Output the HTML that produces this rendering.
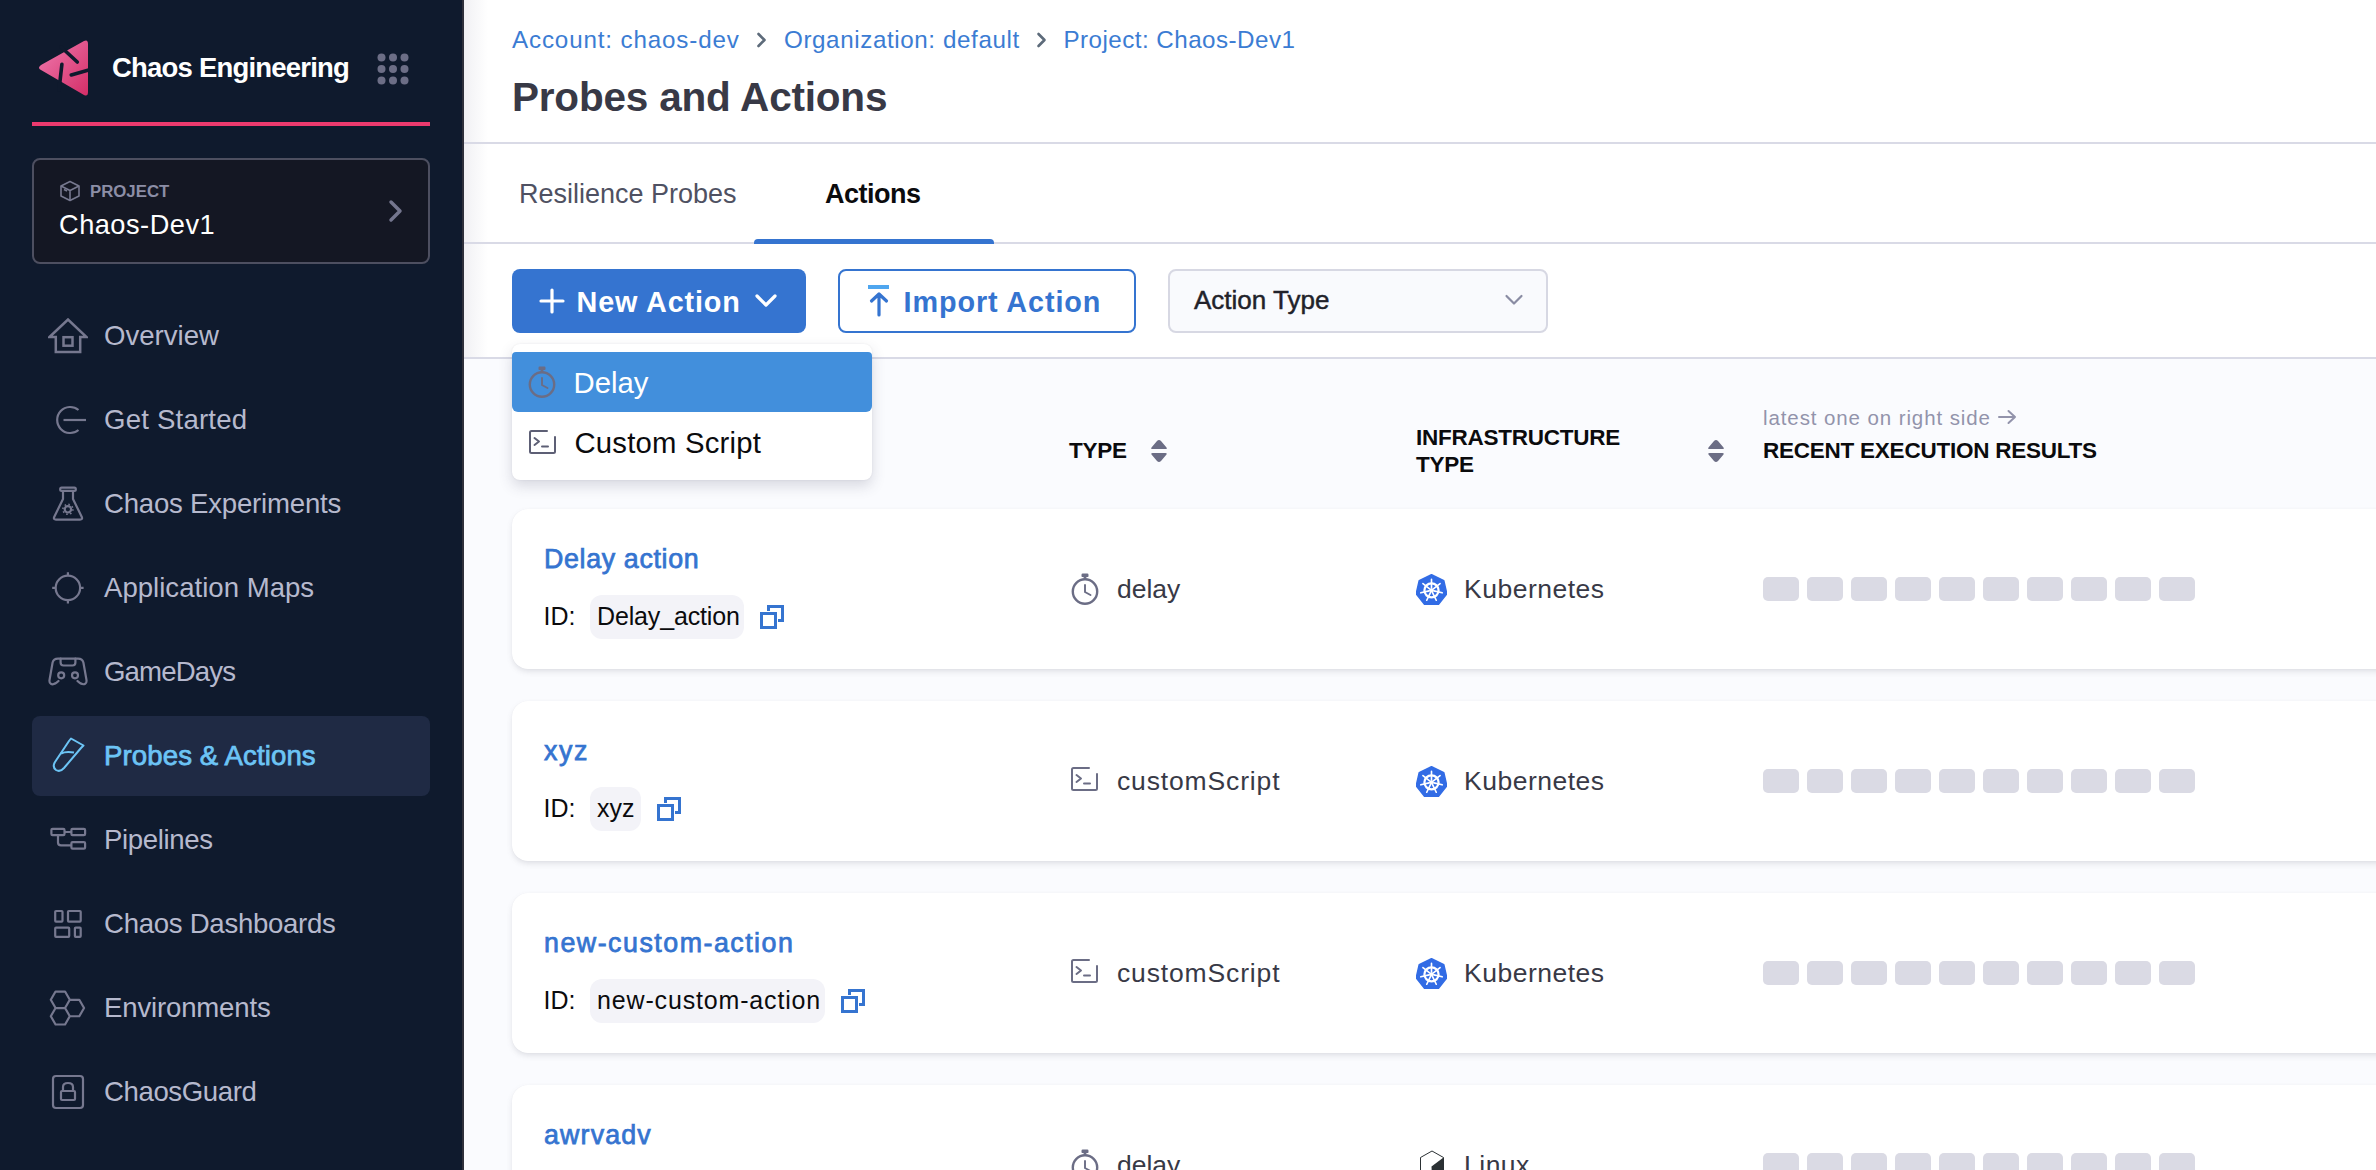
<!DOCTYPE html>
<html><head><meta charset="utf-8">
<style>
*{box-sizing:border-box;margin:0;padding:0}
html,body{width:2376px;height:1170px;overflow:hidden;background:#fff;font-family:"Liberation Sans",sans-serif}
.a{position:absolute;white-space:nowrap}
#side{position:absolute;left:0;top:0;width:462px;height:1170px;background:#0f1a2d}
#sideline{position:absolute;left:462px;top:0;width:2px;height:1170px;background:#2f303b}
#main{position:absolute;left:464px;top:0;width:1912px;height:1170px;background:#fff}
.nav{position:absolute;left:104px;font-size:27.6px;line-height:28px;color:#b6b9cd}
.ico{position:absolute}
.card{left:512px;width:1900px;height:160px;background:#fff;border-radius:16px;box-shadow:0 0 1px rgba(40,41,61,0.06),0 3px 6px -1px rgba(96,97,112,0.2)}
.rname{left:544px;font-size:26.8px;line-height:26.8px;color:#3574d0;-webkit-text-stroke:0.75px #3574d0}
.rid{font-size:25px;line-height:25px;color:#0b0b0d}
.pill{left:590px;height:44px;border-radius:12px;background:#f3f3f8}
.rtxt{font-size:26.5px;line-height:26.5px;color:#383946}
.bar{width:36px;height:24px;border-radius:5px;background:#dadae4}
.bc{font-size:24.2px;line-height:25px;color:#3b7cd3;letter-spacing:0.85px}
.th{font-size:22.5px;line-height:23px;font-weight:bold;color:#0b0b0d;letter-spacing:-0.24px}
</style></head><body>
<div id="side">
  <!-- logo -->
  <svg class="ico" style="left:36px;top:38px" width="54" height="60" viewBox="0 0 54 60">
    <defs><linearGradient id="lg" x1="0" y1="0" x2="1" y2="1"><stop offset="0" stop-color="#f07bb0"/><stop offset="1" stop-color="#d42e67"/></linearGradient></defs>
    <path d="M48 3 Q52 1 52 6 L52 54 Q52 59 48 57 L5 32 Q1 30 5 27 Z" fill="url(#lg)"/>
    <path d="M25 9 L41.3 24" stroke="#0f1a2d" stroke-width="3.6" stroke-linecap="round"/>
    <path d="M25.9 26.2 L23 52" stroke="#0f1a2d" stroke-width="3.6" stroke-linecap="round"/>
    <path d="M35.3 36.9 L56 31" stroke="#0f1a2d" stroke-width="3.6" stroke-linecap="round"/>
  </svg>
  <div class="a" id="t_ce" style="left:112px;top:54px;font-size:27.5px;line-height:28px;font-weight:bold;color:#fff;letter-spacing:-0.8px">Chaos Engineering</div>
  <svg class="ico" style="left:377px;top:53px" width="32" height="32" viewBox="0 0 32 32" fill="#6c6e86">
    <circle cx="4.5" cy="4.5" r="4"/><circle cx="16" cy="4.5" r="4"/><circle cx="27.5" cy="4.5" r="4"/>
    <circle cx="4.5" cy="16" r="4"/><circle cx="16" cy="16" r="4"/><circle cx="27.5" cy="16" r="4"/>
    <circle cx="4.5" cy="27.5" r="4"/><circle cx="16" cy="27.5" r="4"/><circle cx="27.5" cy="27.5" r="4"/>
  </svg>
  <div class="a" style="left:32px;top:122px;width:398px;height:4px;background:#ec3a6e"></div>
  <!-- project box -->
  <div class="a" style="left:32px;top:158px;width:398px;height:106px;border:2px solid #4d4f60;border-radius:8px;background:#141723"></div>
  <svg class="ico" style="left:59px;top:180px" width="22" height="22" viewBox="0 0 22 22" fill="none" stroke="#77798f" stroke-width="1.6" stroke-linejoin="round">
    <path d="M11 1.5 L20 6 L20 16 L11 20.5 L2 16 L2 6 Z"/><path d="M2 6 L11 10.5 L20 6 M11 10.5 L11 20.5"/><path d="M5 9.5 L8 11"/>
  </svg>
  <div class="a" id="t_proj" style="left:90px;top:183px;font-size:16.8px;line-height:17px;font-weight:bold;color:#8c8ea6;letter-spacing:0px">PROJECT</div>
  <div class="a" id="t_dev" style="left:59px;top:211px;font-size:27.2px;line-height:28px;color:#fff;letter-spacing:0.5px">Chaos-Dev1</div>
  <svg class="ico" style="left:386px;top:198px" width="20" height="26" viewBox="0 0 20 26" fill="none" stroke="#74768e" stroke-width="3.5" stroke-linecap="round" stroke-linejoin="round"><path d="M5 4 L14 13 L5 22"/></svg>

  <!-- nav -->
  <svg class="ico" style="left:48px;top:318px" width="40" height="36" viewBox="0 0 40 36" fill="none" stroke="#76788f" stroke-width="2.5">
    <path d="M1.5 19 L20 1.5 L38.5 19 L32.2 19 L32.2 34 L7.8 34 L7.8 19 Z"/><rect x="15.5" y="19.2" width="9" height="8.5"/>
  </svg>
  <div class="a nav" id="t_ov" style="top:322px">Overview</div>
  <svg class="ico" style="left:53px;top:404px" width="36" height="32" viewBox="0 0 36 32" fill="none" stroke="#76788f" stroke-width="2.2">
    <path d="M25.5 6 A13 13 0 1 0 25.5 26"/><path d="M10.5 16 L33 16"/>
  </svg>
  <div class="a nav" style="top:406px;letter-spacing:0.2px">Get Started</div>
  <svg class="ico" style="left:50px;top:484px" width="36" height="40" viewBox="0 0 36 40" fill="none" stroke="#76788f" stroke-width="2.2" stroke-linejoin="round">
    <rect x="10.2" y="3.6" width="15.6" height="3.2" rx="1.4"/><path d="M13 6.8 L13 15 L4.2 33 Q3.2 35.6 6 35.6 L30 35.6 Q32.8 35.6 31.8 33 L23 15 L23 6.8"/><circle cx="17.9" cy="25.3" r="3.2"/><circle cx="17.9" cy="25.3" r="5" stroke-width="1.6" stroke-dasharray="1.6 2.3"/>
  </svg>
  <div class="a nav" style="top:490px;letter-spacing:-0.22px">Chaos Experiments</div>
  <svg class="ico" style="left:50px;top:570px" width="36" height="36" viewBox="0 0 36 36" fill="none" stroke="#76788f" stroke-width="2.2">
    <circle cx="17.9" cy="17.9" r="12.2"/><path d="M17.9 2.2 L17.9 5.7 M17.9 30.1 L17.9 33.6 M2.2 17.9 L5.7 17.9 M30.1 17.9 L33.6 17.9"/>
  </svg>
  <div class="a nav" style="top:574px">Application Maps</div>
  <svg class="ico" style="left:48px;top:654px" width="40" height="34" viewBox="0 0 40 34" fill="none" stroke="#76788f" stroke-width="2.2" stroke-linejoin="round" stroke-linecap="round">
    <path d="M10.5 27 Q6 31.5 2.8 29.8 Q1 28.8 1.6 25.5 L4.6 8.5 Q5.5 4.6 10 4.6 L30 4.6 Q34.5 4.6 35.4 8.5 L38.4 25.5 Q39 28.8 37.2 29.8 Q34 31.5 29.5 27"/><path d="M12.6 4.6 L12.6 8.5 Q12.6 11.5 15.5 11.5 L24.5 11.5 Q27.4 11.5 27.4 8.5 L27.4 4.6"/><circle cx="13.2" cy="21.3" r="3"/><circle cx="27" cy="21.3" r="3"/>
  </svg>
  <div class="a nav" style="top:658px;letter-spacing:-0.85px">GameDays</div>
  <div class="a" style="left:32px;top:716px;width:398px;height:80px;border-radius:8px;background:#1f2a44"></div>
  <svg class="ico" style="left:52px;top:737px" width="34" height="36" viewBox="0 0 34 36" fill="none" stroke="#6cc4f5" stroke-width="2" stroke-linejoin="round">
    <path d="M19 1.5 L31.5 8.5 L29 11 L12 31 Q8 35.5 4 33 Q0 30 3 25 L17 4 Z"/><path d="M9 16.5 Q14 14 22 15.5"/>
  </svg>
  <div class="a nav" id="t_pa" style="top:742px;color:#6cc4f5;-webkit-text-stroke:0.75px #6cc4f5;letter-spacing:0.1px">Probes &amp; Actions</div>
  <svg class="ico" style="left:48px;top:826px" width="40" height="26" viewBox="0 0 40 26" fill="none" stroke="#76788f" stroke-width="2.2">
    <rect x="3.4" y="2.9" width="13.1" height="6.3" rx="1.2"/><rect x="23.4" y="2.9" width="13.7" height="6.3" rx="1.2"/><rect x="23.4" y="16.1" width="13.7" height="6.5" rx="1.2"/><path d="M16.5 6 L23.4 6 M10 9.2 L10 16.5 Q10 19.4 13 19.4 L23.4 19.4"/>
  </svg>
  <div class="a nav" style="top:826px;letter-spacing:-0.38px">Pipelines</div>
  <svg class="ico" style="left:52px;top:908px" width="32" height="32" viewBox="0 0 32 32" fill="none" stroke="#76788f" stroke-width="2.2">
    <rect x="3.2" y="3" width="7.3" height="10.6" rx="0.8"/><rect x="16" y="3" width="12.7" height="10.6" rx="0.8"/><rect x="3.2" y="19.6" width="14" height="9.3" rx="0.8"/><rect x="22.9" y="19.6" width="5.8" height="9.3" rx="0.8"/>
  </svg>
  <div class="a nav" style="top:910px;letter-spacing:-0.29px">Chaos Dashboards</div>
  <svg class="ico" style="left:48px;top:988px" width="40" height="40" viewBox="0 0 40 40" fill="none" stroke="#76788f" stroke-width="2.2" stroke-linejoin="round">
    <path d="M21.80 11.80 L17.05 20.03 L7.55 20.03 L2.80 11.80 L7.55 3.57 L17.05 3.57 Z M21.80 28.25 L17.05 36.48 L7.55 36.48 L2.80 28.25 L7.55 20.03 L17.05 20.03 Z M36.05 20.03 L31.30 28.25 L21.80 28.25 L17.05 20.03 L21.80 11.80 L31.30 11.80 Z"/>
  </svg>
  <div class="a nav" style="top:994px;letter-spacing:-0.18px">Environments</div>
  <svg class="ico" style="left:51px;top:1074px" width="34" height="36" viewBox="0 0 34 36" fill="none" stroke="#76788f" stroke-width="2.2">
    <rect x="2" y="2" width="30" height="32" rx="3"/><rect x="10" y="17" width="14" height="9" rx="1"/><path d="M12 17 L12 13 Q12 9 17 9 Q22 9 22 13 L22 17"/>
  </svg>
  <div class="a nav" style="top:1078px;letter-spacing:-0.4px">ChaosGuard</div>
</div>
<div id="sideline"></div>

<div id="main">
  <div class="a" style="left:0;top:0;width:24px;height:1170px;background:linear-gradient(to right,#f1f1f4,rgba(255,255,255,0))"></div>
</div>
<!-- header -->
<div class="a bc" id="t_bc1" style="left:512px;top:27px">Account: chaos-dev</div>
<svg class="ico" style="left:755px;top:31px" width="14" height="18" viewBox="0 0 14 18" fill="none" stroke="#5d6b7a" stroke-width="2.6" stroke-linecap="round" stroke-linejoin="round"><path d="M3.5 3 L9.5 9 L3.5 15"/></svg>
<div class="a bc" id="t_bc2" style="left:784px;top:27px;letter-spacing:0.6px">Organization: default</div>
<svg class="ico" style="left:1035px;top:31px" width="14" height="18" viewBox="0 0 14 18" fill="none" stroke="#5d6b7a" stroke-width="2.6" stroke-linecap="round" stroke-linejoin="round"><path d="M3.5 3 L9.5 9 L3.5 15"/></svg>
<div class="a bc" id="t_bc3" style="left:1063.5px;top:27px;letter-spacing:0.46px">Project: Chaos-Dev1</div>
<div class="a" id="t_title" style="left:512px;top:76.5px;font-size:40.5px;line-height:41px;font-weight:bold;color:#383946;letter-spacing:-0.2px">Probes and Actions</div>
<div class="a" style="left:464px;top:142px;width:1912px;height:2px;background:#d9dae6"></div>
<!-- tabs -->
<div class="a" id="t_rp" style="left:519px;top:180.5px;font-size:27px;line-height:27px;color:#4f5162">Resilience Probes</div>
<div class="a" id="t_act" style="left:825px;top:180.5px;font-size:27px;line-height:27px;color:#0b0b0d;font-weight:bold;letter-spacing:-0.5px">Actions</div>
<div class="a" style="left:464px;top:242px;width:1912px;height:2px;background:#d9dae6"></div>
<div class="a" style="left:754px;top:239px;width:240px;height:5px;background:#3574d0;border-radius:4px 4px 0 0"></div>
<!-- toolbar -->
<div class="a" style="left:512px;top:269px;width:294px;height:64px;background:#3574d0;border-radius:8px"></div>
<svg class="ico" style="left:539px;top:288px" width="26" height="26" viewBox="0 0 26 26" stroke="#fff" stroke-width="3.2" stroke-linecap="round"><path d="M13 2 L13 24 M2 13 L24 13"/></svg>
<div class="a" id="t_na" style="left:576.5px;top:287.5px;font-size:28.8px;line-height:29px;color:#fff;font-weight:bold;letter-spacing:0.85px">New Action</div>
<svg class="ico" style="left:754px;top:292px" width="24" height="18" viewBox="0 0 24 18" fill="none" stroke="#fff" stroke-width="3.2" stroke-linecap="round" stroke-linejoin="round"><path d="M3 4 L12 13 L21 4"/></svg>
<div class="a" style="left:838px;top:269px;width:298px;height:64px;border:2px solid #3574d0;border-radius:8px;background:#fff"></div>
<div class="a" style="left:868px;top:285px;width:21px;height:4px;background:#4fa6ef"></div>
<svg class="ico" style="left:868px;top:290px" width="22" height="28" viewBox="0 0 22 28" fill="none" stroke="#3574d0" stroke-width="3.2" stroke-linecap="round" stroke-linejoin="round"><path d="M11 4 L11 25 M3.5 11 L11 4 L18.5 11"/></svg>
<div class="a" id="t_ia" style="left:903.5px;top:287.5px;font-size:28.8px;line-height:29px;color:#3574d0;font-weight:bold;letter-spacing:0.9px">Import Action</div>
<div class="a" style="left:1168px;top:269px;width:380px;height:64px;border:2px solid #d7d8e3;border-radius:8px;background:#f9fafd"></div>
<div class="a" id="t_at" style="left:1194px;top:287px;font-size:26px;line-height:26px;color:#22222a;-webkit-text-stroke:0.45px #22222a">Action Type</div>
<svg class="ico" style="left:1504px;top:293px" width="20" height="14" viewBox="0 0 20 14" fill="none" stroke="#8a8ca3" stroke-width="2.2" stroke-linecap="round" stroke-linejoin="round"><path d="M2.5 3 L10 10.5 L17.5 3"/></svg>
<div class="a" style="left:464px;top:357px;width:1912px;height:2px;background:#d9dae6"></div>
<div class="a" style="left:464px;top:359px;width:1912px;height:811px;background:#fafbfe"></div>
<!-- table header -->
<div class="a th" id="t_type" style="left:1069px;top:439px">TYPE</div>
<svg class="ico sort" style="left:1150px;top:439px" width="18" height="24" viewBox="0 0 18 24" fill="#6b6d85"><path d="M9 1 Q10 1 11 2 L16.5 8.5 Q17.5 10 15.5 10 L2.5 10 Q0.5 10 1.5 8.5 L7 2 Q8 1 9 1 Z M9 23 Q10 23 11 22 L16.5 15.5 Q17.5 14 15.5 14 L2.5 14 Q0.5 14 1.5 15.5 L7 22 Q8 23 9 23 Z"/></svg>
<div class="a th" id="t_inf" style="left:1416px;top:426px">INFRASTRUCTURE</div>
<div class="a th" style="left:1416px;top:452.6px">TYPE</div>
<svg class="ico sort" style="left:1707px;top:439px" width="18" height="24" viewBox="0 0 18 24" fill="#6b6d85"><path d="M9 1 Q10 1 11 2 L16.5 8.5 Q17.5 10 15.5 10 L2.5 10 Q0.5 10 1.5 8.5 L7 2 Q8 1 9 1 Z M9 23 Q10 23 11 22 L16.5 15.5 Q17.5 14 15.5 14 L2.5 14 Q0.5 14 1.5 15.5 L7 22 Q8 23 9 23 Z"/></svg>
<div class="a" id="t_lat" style="left:1763px;top:407px;font-size:20.5px;line-height:21px;color:#9293ab;letter-spacing:0.9px">latest one on right side</div>
<svg class="ico" style="left:1997px;top:409px" width="20" height="16" viewBox="0 0 20 16" fill="none" stroke="#9293ab" stroke-width="2" stroke-linecap="round" stroke-linejoin="round"><path d="M2 8 L18 8 M11.5 2 L18 8 L11.5 14"/></svg>
<div class="a th" id="t_rer" style="left:1763px;top:439px">RECENT EXECUTION RESULTS</div>
<svg width="0" height="0" style="position:absolute">
<defs>
<symbol id="sw" viewBox="0 0 28 32"><g fill="none" stroke="currentColor" stroke-linecap="round"><circle cx="14" cy="18.5" r="12.2" stroke-width="2.4"/><path d="M14 12 L14 19 L19.5 22" stroke-width="1.9"/></g><rect x="10.5" y="0.5" width="7" height="3.6" rx="1.2" fill="currentColor"/><rect x="12.6" y="3" width="2.8" height="3.5" fill="currentColor"/></symbol>
<symbol id="term" viewBox="0 0 27 24"><g fill="none" stroke="currentColor" stroke-width="2" stroke-linecap="round" stroke-linejoin="round"><path d="M18 1 L2.5 1 Q1 1 1 2.5 L1 21.5 Q1 23 2.5 23 L24.5 23 Q26 23 26 21.5 L26 7"/><path d="M5.5 8 L10 11.5 L5.5 15"/><path d="M13 16.5 L19 16.5"/></g></symbol>
<symbol id="copy" viewBox="0 0 24 24"><g fill="none" stroke="currentColor" stroke-width="3"><rect x="1.5" y="8.5" width="14" height="14"/><path d="M8.5 6 L8.5 1.5 L22.5 1.5 L22.5 15.5 L18 15.5"/></g></symbol>
<symbol id="k8s" viewBox="0 0 32 32"><path d="M16.00 0.70 L28.67 6.80 L31.79 20.50 L23.03 31.50 L8.97 31.50 L0.21 20.50 L3.33 6.80 Z" fill="#326ce5" stroke="#326ce5" stroke-width="1.6" stroke-linejoin="round"/><g fill="none" stroke="#fff" stroke-linecap="round"><circle cx="16" cy="16.9" r="7.3" stroke-width="2.3"/><path d="M16.00 14.40 L16.00 5.60 M17.95 15.34 L24.83 9.85 M18.44 17.46 L27.02 19.41 M17.08 19.15 L20.90 27.08 M14.92 19.15 L11.10 27.08 M13.56 17.46 L4.98 19.41 M14.05 15.34 L7.17 9.85" stroke-width="1.7"/></g><circle cx="16" cy="16.9" r="2.2" fill="#fff"/></symbol>
</defs></svg>
<!-- ROWS START -->
<div class="a card" style="top:509px"></div>
<div class="a rname" style="top:545.8px;letter-spacing:0.65px">Delay action</div>
<div class="a rid" style="left:543.5px;top:603.8px">ID:</div>
<div class="a pill" style="top:595px;width:154px"></div>
<div class="a rid" style="left:597px;top:603.8px;letter-spacing:-0.15px">Delay_action</div>
<svg class="ico" style="left:759.8px;top:605px;color:#3574d0" width="24" height="24"><use href="#copy"/></svg>
<svg class="ico" style="left:1071px;top:573px;color:#6b6d85" width="28" height="32" viewBox="0 0 28 32"><use href="#sw"/></svg>
<div class="a rtxt" style="left:1117px;top:576px;letter-spacing:0px">delay</div>
<svg class="ico" style="left:1416px;top:573.5px" width="31" height="31" viewBox="0 0 32 32"><use href="#k8s"/></svg>
<div class="a rtxt" style="left:1464px;top:576px;letter-spacing:0.5px">Kubernetes</div>
<div class="a bar" style="left:1763px;top:577px"></div>
<div class="a bar" style="left:1807px;top:577px"></div>
<div class="a bar" style="left:1851px;top:577px"></div>
<div class="a bar" style="left:1895px;top:577px"></div>
<div class="a bar" style="left:1939px;top:577px"></div>
<div class="a bar" style="left:1983px;top:577px"></div>
<div class="a bar" style="left:2027px;top:577px"></div>
<div class="a bar" style="left:2071px;top:577px"></div>
<div class="a bar" style="left:2115px;top:577px"></div>
<div class="a bar" style="left:2159px;top:577px"></div>
<div class="a card" style="top:701px"></div>
<div class="a rname" style="top:737.8px;letter-spacing:1.6px">xyz</div>
<div class="a rid" style="left:543.5px;top:795.8px">ID:</div>
<div class="a pill" style="top:787px;width:51.4px"></div>
<div class="a rid" style="left:597px;top:795.8px;letter-spacing:0px">xyz</div>
<svg class="ico" style="left:657.2px;top:797px;color:#3574d0" width="24" height="24"><use href="#copy"/></svg>
<svg class="ico" style="left:1071px;top:767px;color:#6b6d85" width="27" height="24" viewBox="0 0 27 24"><use href="#term"/></svg>
<div class="a rtxt" style="left:1117px;top:768px;letter-spacing:0.85px">customScript</div>
<svg class="ico" style="left:1416px;top:765.5px" width="31" height="31" viewBox="0 0 32 32"><use href="#k8s"/></svg>
<div class="a rtxt" style="left:1464px;top:768px;letter-spacing:0.5px">Kubernetes</div>
<div class="a bar" style="left:1763px;top:769px"></div>
<div class="a bar" style="left:1807px;top:769px"></div>
<div class="a bar" style="left:1851px;top:769px"></div>
<div class="a bar" style="left:1895px;top:769px"></div>
<div class="a bar" style="left:1939px;top:769px"></div>
<div class="a bar" style="left:1983px;top:769px"></div>
<div class="a bar" style="left:2027px;top:769px"></div>
<div class="a bar" style="left:2071px;top:769px"></div>
<div class="a bar" style="left:2115px;top:769px"></div>
<div class="a bar" style="left:2159px;top:769px"></div>
<div class="a card" style="top:893px"></div>
<div class="a rname" style="top:929.8px;letter-spacing:1.5px">new-custom-action</div>
<div class="a rid" style="left:543.5px;top:987.8px">ID:</div>
<div class="a pill" style="top:979px;width:234.8px"></div>
<div class="a rid" style="left:597px;top:987.8px;letter-spacing:0.84px">new-custom-action</div>
<svg class="ico" style="left:840.6px;top:989px;color:#3574d0" width="24" height="24"><use href="#copy"/></svg>
<svg class="ico" style="left:1071px;top:959px;color:#6b6d85" width="27" height="24" viewBox="0 0 27 24"><use href="#term"/></svg>
<div class="a rtxt" style="left:1117px;top:960px;letter-spacing:0.85px">customScript</div>
<svg class="ico" style="left:1416px;top:957.5px" width="31" height="31" viewBox="0 0 32 32"><use href="#k8s"/></svg>
<div class="a rtxt" style="left:1464px;top:960px;letter-spacing:0.5px">Kubernetes</div>
<div class="a bar" style="left:1763px;top:961px"></div>
<div class="a bar" style="left:1807px;top:961px"></div>
<div class="a bar" style="left:1851px;top:961px"></div>
<div class="a bar" style="left:1895px;top:961px"></div>
<div class="a bar" style="left:1939px;top:961px"></div>
<div class="a bar" style="left:1983px;top:961px"></div>
<div class="a bar" style="left:2027px;top:961px"></div>
<div class="a bar" style="left:2071px;top:961px"></div>
<div class="a bar" style="left:2115px;top:961px"></div>
<div class="a bar" style="left:2159px;top:961px"></div>
<div class="a card" style="top:1085px"></div>
<div class="a rname" style="top:1121.8px;letter-spacing:1.15px">awrvadv</div>
<div class="a rid" style="left:543.5px;top:1179.8px">ID:</div>
<div class="a pill" style="top:1171px;width:120px"></div>
<div class="a rid" style="left:597px;top:1179.8px;letter-spacing:0px">awrvadv</div>
<svg class="ico" style="left:725.8px;top:1181px;color:#3574d0" width="24" height="24"><use href="#copy"/></svg>
<svg class="ico" style="left:1071px;top:1149px;color:#6b6d85" width="28" height="32" viewBox="0 0 28 32"><use href="#sw"/></svg>
<div class="a rtxt" style="left:1117px;top:1152px;letter-spacing:0px">delay</div>
<svg class="ico" style="left:1419px;top:1149px" width="26" height="32" viewBox="0 0 26 32"><path d="M13 2 L24.5 8.5 L24.5 23.5 L13 30 L1.5 23.5 L1.5 8.5 Z" fill="#fff" stroke="#2b3134" stroke-width="1"/><path d="M24.5 8.5 L24.5 23.5 L13 30 L12.5 17.5 Z" fill="#2b3134"/></svg>
<div class="a rtxt" style="left:1464px;top:1152px;letter-spacing:0.5px">Linux</div>
<div class="a bar" style="left:1763px;top:1153px"></div>
<div class="a bar" style="left:1807px;top:1153px"></div>
<div class="a bar" style="left:1851px;top:1153px"></div>
<div class="a bar" style="left:1895px;top:1153px"></div>
<div class="a bar" style="left:1939px;top:1153px"></div>
<div class="a bar" style="left:1983px;top:1153px"></div>
<div class="a bar" style="left:2027px;top:1153px"></div>
<div class="a bar" style="left:2071px;top:1153px"></div>
<div class="a bar" style="left:2115px;top:1153px"></div>
<div class="a bar" style="left:2159px;top:1153px"></div>
<!-- ROWS END -->
<!-- dropdown -->
<div class="a" style="left:512px;top:344px;width:360px;height:136px;background:#fff;border-radius:8px;box-shadow:0 0 2px rgba(40,41,61,0.08),0 6px 14px rgba(60,60,90,0.18)"></div>
<div class="a" style="left:512px;top:352px;width:360px;height:60px;background:#428fdc;border-radius:4px 4px 6px 6px"></div>
<svg class="ico" style="left:527.5px;top:366px;color:#6b6d85" width="28" height="32" viewBox="0 0 28 32"><use href="#sw"/></svg>
<div class="a" id="t_dl" style="left:573.5px;top:367.7px;font-size:29.3px;line-height:29.3px;color:#fff">Delay</div>
<svg class="ico" style="left:529px;top:430px;color:#5d5f75" width="27" height="24" viewBox="0 0 27 24"><use href="#term"/></svg>
<div class="a" id="t_cs" style="left:574.5px;top:427.6px;font-size:29.3px;line-height:29.3px;color:#0b0b0d;letter-spacing:0.2px">Custom Script</div>


</body></html>
